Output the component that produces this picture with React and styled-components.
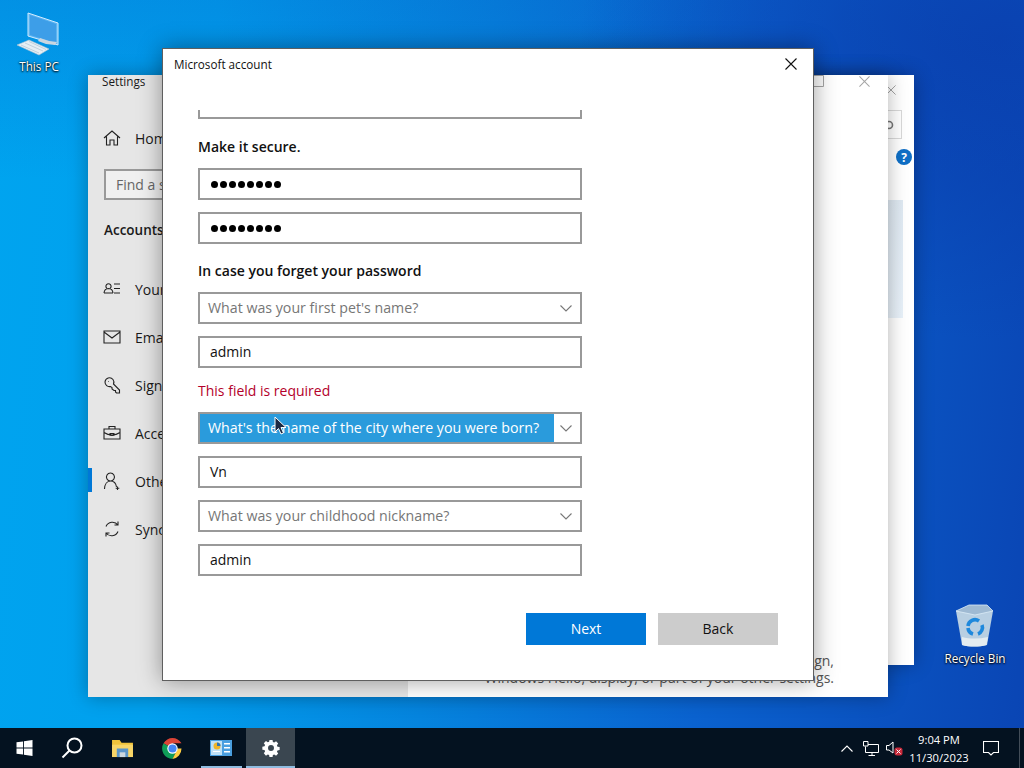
import React from 'react';
import styled, { createGlobalStyle } from 'styled-components';

const GlobalStyle = createGlobalStyle`
  html, body {
    margin: 0;
    padding: 0;
    width: 1024px;
    height: 768px;
    overflow: hidden;
    font-family: "Open Sans", "Noto Sans", sans-serif;
  }
  * { box-sizing: border-box; }
`;

const Screen = styled.div`
  width: 1024px;
  height: 768px;
  display: flex;
  flex-direction: column;
  overflow: hidden;
`;

const Desktop = styled.div`
  position: relative;
  flex: 1;
  background:
    linear-gradient(180deg, rgba(10, 80, 190, 0.22) 0, rgba(10, 80, 190, 0) 180px),
    radial-gradient(ellipse 420px 300px at 1000px 40px, #0a3fae 0%, rgba(10, 63, 174, 0) 100%),
    linear-gradient(96deg, #00a4ef 0%, #00a0ee 20%, #0584de 45%, #0a62cf 70%, #0a45b4 100%);
`;

const DesktopIcon = styled.div`
  position: absolute;
  left: ${(p) => p.$left}px;
  top: ${(p) => p.$top}px;
  width: 76px;
  display: flex;
  flex-direction: column;
  align-items: center;
  gap: 2px;
  color: #fff;
  font-size: 11.7px;
  text-shadow: 0 1px 2px #000, 0 0 2px #000;
`;

const Window = styled.div`
  position: absolute;
  left: ${(p) => p.$left}px;
  top: ${(p) => p.$top}px;
  width: ${(p) => p.$width}px;
  height: ${(p) => p.$height}px;
  background: #fff;
  box-shadow: 0 0 18px rgba(0, 0, 0, 0.3);
`;

const BackWindowBody = styled.div`
  display: flex;
  flex-direction: column;
  align-items: flex-end;
  padding: 10px 10px 0 0;
`;

const BackClose = styled.div`
  width: 10px;
  margin-right: 8px;
  color: #9a9a9a;
  display: flex;
`;

const BackSearch = styled.div`
  width: 120px;
  height: 29px;
  margin: 15px 2px 0 0;
  border: 1px solid #d9d9d9;
  display: flex;
  justify-content: flex-end;
  align-items: center;
  padding-right: 7px;
`;

const HelpBadge = styled.div`
  width: 16px;
  height: 16px;
  margin: 10px -8px 0 0;
  border-radius: 50%;
  background: #0f6fc6;
  color: #fff;
  font-size: 12px;
  font-weight: 700;
  display: flex;
  align-items: center;
  justify-content: center;
`;

const BackSelection = styled.div`
  width: 120px;
  height: 118px;
  margin: 35px 1px 0 0;
  background: linear-gradient(#dfe9f2, #e8f1f9);
`;

const SettingsWindow = styled(Window)`
  display: flex;
`;

const Sidebar = styled.div`
  width: 320px;
  flex: none;
  background: #e6e6e6;
  display: flex;
  flex-direction: column;
`;

const SidebarTitle = styled.div`
  height: 39px;
  line-height: 13px;
  padding: 0 0 0 14px;
  font-size: 11.7px;
  color: #1a1a1a;
`;

const NavRow = styled.div`
  position: relative;
  height: 48px;
  display: flex;
  align-items: center;
  gap: 14px;
  padding-left: 15px;
  font-size: 14px;
  color: #1a1a1a;
  white-space: nowrap;
  svg { flex: none; }
`;

const NavMarker = styled.span`
  position: absolute;
  left: 0;
  top: 11px;
  width: 4px;
  height: 24px;
  background: #0078d7;
`;

const SearchBox = styled.div`
  margin: 7px 0 0 16px;
  width: 270px;
  height: 31px;
  border: 2px solid #999;
  padding-left: 10px;
  display: flex;
  align-items: center;
  font-size: 14px;
  color: #666;
  background: #f0f0f0;
`;

const SidebarHeading = styled.div`
  margin: 21px 0 26px 16px;
  font-size: 13.5px;
  font-weight: 600;
  color: #1a1a1a;
`;

const SettingsMain = styled.div`
  flex: 1;
  min-width: 0;
  display: flex;
  flex-direction: column;
`;

const MainTitleBar = styled.div`
  height: 12px;
  display: flex;
  justify-content: flex-end;
  align-items: center;
  gap: 35px;
  padding-right: 18px;
  color: #a5a5a5;
`;

const MainFoot = styled.div`
  margin-top: auto;
  padding: 0 54px 11px 0;
  font-size: 14px;
  line-height: 17px;
  color: #555;
  text-align: right;
  white-space: nowrap;
`;

const Dialog = styled(Window)`
  border: 1px solid #5f5f5f;
  box-shadow: 0 0 22px rgba(0, 0, 0, 0.38);
  display: flex;
  flex-direction: column;
`;

const DialogTitleBar = styled.div`
  height: 61px;
  flex: none;
  display: flex;
  justify-content: space-between;
  align-items: flex-start;
  padding: 7px 16px 0 11px;
  font-size: 11.7px;
  line-height: 16px;
  color: #111;
`;

const CloseButton = styled.div`
  display: flex;
  color: #111;
  margin-top: 2px;
`;

const Form = styled.div`
  flex: 1;
  display: flex;
  flex-direction: column;
  padding: 0 35px;
`;

const Field = styled.div`
  width: 384px;
  height: 32px;
  flex: none;
  margin-bottom: ${(p) => p.$gap ?? 12}px;
  border: 2px solid #999;
  background: #fff;
  display: flex;
  align-items: center;
  padding: 0 0 2px 10px;
  font-size: 14px;
  color: #111;
`;

const ClippedField = styled(Field)`
  height: 9px;
  border-top: none;
  margin-bottom: 0;
`;

const Dots = styled.span`
  display: flex;
  gap: 2px;
  padding: 2px 0 0 1px;
`;

const Dot = styled.i`
  width: 7px;
  height: 7px;
  border-radius: 50%;
  background: #000;
`;

const Select = styled(Field)`
  padding: 0;
  color: #767676;
  font-size: 14.2px;
`;

const SelectText = styled.div`
  flex: 1;
  height: 100%;
  display: flex;
  align-items: center;
  padding: 0 0 1px 8px;
  white-space: nowrap;
  background: ${(p) => (p.$active ? '#2a9bdc' : 'transparent')};
  color: ${(p) => (p.$active ? '#fff' : 'inherit')};
`;

const SelectArrow = styled.div`
  width: 26px;
  height: 100%;
  flex: none;
  display: flex;
  align-items: center;
  justify-content: center;
  padding-right: 2px;
  color: #777;
`;

const Label = styled.div`
  height: 22px;
  margin: ${(p) => p.$top}px 0 ${(p) => p.$bottom}px;
  line-height: 22px;
  font-size: 14px;
  font-weight: 600;
  color: #111;
`;

const ErrorText = styled(Label)`
  font-weight: 400;
  color: #b4002a;
`;

const ButtonRow = styled.div`
  display: flex;
  justify-content: flex-end;
  gap: 12px;
  margin-top: 37px;
  width: 580px;
`;

const Button = styled.div`
  width: 120px;
  height: 32px;
  padding-bottom: 2px;
  display: flex;
  align-items: center;
  justify-content: center;
  font-size: 14px;
  background: ${(p) => (p.$primary ? '#0078d7' : '#cccccc')};
  color: ${(p) => (p.$primary ? '#fff' : '#111')};
`;

const Pointer = styled.svg`
  position: absolute;
  left: 274px;
  top: 416px;
`;

const Taskbar = styled.div`
  height: 40px;
  flex: none;
  background: #041220;
  display: flex;
  align-items: stretch;
  color: #fff;
`;

const TaskButton = styled.div`
  position: relative;
  width: 49.2px;
  display: flex;
  align-items: center;
  justify-content: center;
  background: ${(p) => (p.$active ? '#3a4650' : 'transparent')};
  &::after {
    content: '';
    display: ${(p) => (p.$open ? 'block' : 'none')};
    position: absolute;
    left: ${(p) => (p.$active ? 0 : 4)}px;
    right: ${(p) => (p.$active ? 0 : 4)}px;
    bottom: 0;
    height: 2px;
    background: #8fbce0;
  }
`;

const Tray = styled.div`
  margin-left: auto;
  display: flex;
  align-items: center;
`;

const TrayIcon = styled.div`
  width: 24px;
  display: flex;
  justify-content: center;
`;

const Clock = styled.div`
  width: 64px;
  padding-top: 1px;
  text-align: center;
  font-size: 11.2px;
  line-height: 18px;
`;

const NoticeButton = styled.div`
  width: 40px;
  margin-right: 8px;
  display: flex;
  justify-content: center;
`;

const ShowDesktop = styled.div`
  width: 5px;
  height: 100%;
  border-left: 1px solid rgba(255, 255, 255, 0.25);
`;

const CloseGlyph = ({ size = 12 }) => (
  <svg width={size} height={size} viewBox="0 0 12 12" fill="none" stroke="currentColor" strokeWidth="1.1">
    <path d="M.5.5l11 11M11.5.5l-11 11" />
  </svg>
);

const Chevron = () => (
  <svg width="12" height="7" viewBox="0 0 12 7" fill="none" stroke="currentColor" strokeWidth="1.1">
    <path d="M.5.5L6 6l5.5-5.5" />
  </svg>
);

const Glyph = ({ children }) => (
  <svg width="18" height="18" viewBox="0 0 18 18" fill="none" stroke="#222" strokeWidth="1.1">
    {children}
  </svg>
);

const navItems = [
  ['Your info', <path key="a" d="M4 8.500a2.600 2.600 0 1 1 3 0M1 13c.3-3 2-4.400 4.500-4.500C8 8.600 9.700 10 10 13M1 13h9M11 4h6M11 8.500h6M11 13h6" />],
  ['Email', <path key="a" d="M1 3h16v12H1zM1 4l8 6 8-6" />],
  ['Sign-in', <path key="a" d="M2 6a4.500 4.500 0 0 1 8-2.500c1 1.300 1 3 .5 4.500l6 6v3h-3l-1-1v-1.500h-1.500L9 13v-1.500L7.500 10.500C4.500 11 2 9 2 6zM5 5.500h.6" />],
  ['Access', <path key="a" d="M1 5h16v10H1zM6 5V2.500h6V5M1 8.500c3 2 5 2.500 8 2.500s5-.500 8-2.500M7 9.500h4v2H7z" />],
  ['Other', <path key="a" d="M7.500 9a4 4 0 1 0-.1 0M1.500 17c.2-4.500 2.500-8 6-8s5.500 2.500 6 6M14.500 14.500v3.500M12.700 16.200h3.600" />],
  ['Sync', <path key="a" d="M3 6.500A7 7 0 0 1 15 5M15 1.500V5h-3.500M15 11.500A7 7 0 0 1 3 13M3 16.500V13h3.500" />],
];

const PcIcon = () => (
  <svg width="46" height="44" viewBox="0 0 46 44">
    <path d="M12 1l30 10v22L12 24z" fill="#5cb5f2" stroke="#cfeaff" strokeWidth="1" />
    <path d="M14 3l26 9v19L14 23z" fill="#3d9ee8" />
    <path d="M24 26l9 3 8 1-2 3-9-1-8-3z" fill="#c9d6e0" />
    <path d="M1 33l12-5 20 9-10 6z" fill="#e6eef4" stroke="#b0c2d0" strokeWidth=".6" />
    <path d="M5 33l18 8M9 31l18 8M13 29.500l17 8" stroke="#a8bccb" strokeWidth=".6" />
  </svg>
);

const BinIcon = () => (
  <svg width="40" height="44" viewBox="0 0 40 44">
    <path d="M1 7L38 7 32 41c-8 2-17 2-25 0z" fill="#b8cfe2" />
    <path d="M1 7L14 1h18l6 6-18 4z" fill="#9fbad3" stroke="#dcecf8" strokeWidth=".8" />
    <path d="M7 33c8 2 17 2 26 0l-1.500 8c-8 2-17 2-24.500 0z" fill="#e4ecf0" />
    <path d="M13 22a7 7 0 0 1 11-5M27 21a7 7 0 0 1-4 9M18 30a7 7 0 0 1-5-6" fill="none" stroke="#1e88dc" strokeWidth="3.600" />
  </svg>
);

const WindowsLogo = () => (
  <svg width="17" height="16" viewBox="0 0 16 16" fill="#fff">
    <path d="M0 2.300L6.500 1.400V7.500H0zM7.400 1.300L16 0V7.500H7.400zM0 8.400H6.500V14.600L0 13.700zM7.400 8.400H16V16L7.400 14.700z" />
  </svg>
);

const SearchIcon = () => (
  <svg width="22" height="22" viewBox="0 0 22 22" fill="none" stroke="#fff" strokeWidth="2" style={{ marginRight: 3 }}>
    <circle cx="13.500" cy="8.500" r="7" />
    <path d="M8.500 13.500L1.500 20.500" />
  </svg>
);

const FolderIcon = () => (
  <svg width="23" height="19" viewBox="0 0 24 20">
    <path d="M1 1h8l2 3h12v15H1z" fill="#f0c33c" />
    <path d="M1 6h22v13H1z" fill="#f8d568" />
    <path d="M6 10h12v9H6z" fill="#5b95c9" />
    <path d="M9 14h6v5H9z" fill="#cdd7de" />
  </svg>
);

const ChromeIcon = () => (
  <svg width="25" height="25" viewBox="0 0 48 48">
    <path d="M24 24L6.700 14A20 20 0 0 1 41.300 14H24z" fill="#db4437" />
    <path d="M24 24L6.700 14A20 20 0 0 0 24 44l10-20z" fill="#0f9d58" />
    <path d="M24 24h17.300A20 20 0 0 1 24 44l10-20z" fill="#ffcd40" />
    <circle cx="24" cy="24" r="10" fill="#fff" />
    <circle cx="24" cy="24" r="7.800" fill="#4285f4" />
  </svg>
);

const PanelIcon = () => (
  <svg width="22" height="16" viewBox="0 0 22 16">
    <path d="M0 0h22v16H0z" fill="#4a9fe0" />
    <path d="M1 1h11v14H1z" fill="#bfe0f6" />
    <circle cx="7" cy="6" r="3.500" fill="#f0b429" />
    <path d="M7 6V2.500A3.500 3.500 0 0 1 10.500 6z" fill="#2f74b5" />
    <path d="M3 11h7v1H3zM14 3h6v1.500h-6zM14 7h6v1.500h-6zM14 11h6v1.500h-6z" fill="#fff" />
  </svg>
);

const GearIcon = () => (
  <svg width="18" height="18" viewBox="-1 0 20 18">
    <path
      fill="#fff"
      fillRule="evenodd"
      d="M7.300 0h3.400l.4 2.400 1.500.6 2-1.400 2.400 2.400-1.400 2 .6 1.500 2.400.4v3.400l-2.400.4-.6 1.500 1.400 2-2.400 2.400-2-1.400-1.500.6-.4 2.400H7.300l-.4-2.400-1.500-.6-2 1.400L1 14.800l1.400-2-.6-1.500L-.6 10.900V7.500l2.400-.4.600-1.500L1 3.600 3.400 1.200l2 1.400 1.500-.6zM9 5.700a3.300 3.300 0 1 0 0 6.600 3.300 3.300 0 0 0 0-6.600z"
    />
  </svg>
);

const TrayChevron = () => (
  <svg width="12" height="7" viewBox="0 0 12 7" fill="none" stroke="#fff" strokeWidth="1.100">
    <path d="M.5 6.500L6 1l5.500 5.500" />
  </svg>
);

const NetworkIcon = () => (
  <svg width="16" height="15" viewBox="0 0 16 15" fill="none" stroke="#fff">
    <path d="M5 3.500H15.500V11.500H2.500V5.500M9 11.500V14M5.500 14.500H12M.5.500H5V5H.5z" />
  </svg>
);

const SpeakerIcon = () => (
  <svg width="18" height="16" viewBox="0 0 18 16">
    <path d="M.5 5.500H3L7 2v11L3 10H.5z" fill="none" stroke="#fff" />
    <rect x="8.500" y="7.500" width="8" height="8" rx="2.500" fill="#c8293a" />
    <path d="M10.500 9.500l4 4M14.500 9.500l-4 4" stroke="#fff" strokeWidth="1" />
  </svg>
);

const NoticeIcon = () => (
  <svg width="16" height="16" viewBox="0 0 16 16" fill="none" stroke="#fff" strokeWidth="1.100">
    <path d="M.5 1.500h15v11h-5L8 15l-2.500-2.500h-5z" />
  </svg>
);

const Password = () => (
  <Field>
    <Dots>
      {Array.from({ length: 8 }).map((_, i) => (
        <Dot key={i} />
      ))}
    </Dots>
  </Field>
);

const Question = ({ text, active }) => (
  <Select>
    <SelectText $active={active}>{text}</SelectText>
    <SelectArrow>
      <Chevron />
    </SelectArrow>
  </Select>
);

export default function App() {
  return (
    <Screen>
      <GlobalStyle />
      <Desktop>
        <DesktopIcon $left={1} $top={12}>
          <PcIcon />
          This PC
        </DesktopIcon>
        <DesktopIcon $left={937} $top={604}>
          <BinIcon />
          Recycle Bin
        </DesktopIcon>

        <Window $left={794} $top={75} $width={120} $height={590}>
          <BackWindowBody>
            <BackClose>
              <CloseGlyph size={10} />
            </BackClose>
            <BackSearch>
              <svg width="10" height="10" viewBox="0 0 10 10" fill="none" stroke="#777" strokeWidth="1.600">
                <circle cx="5" cy="5" r="3.500" />
              </svg>
            </BackSearch>
            <HelpBadge>?</HelpBadge>
            <BackSelection />
          </BackWindowBody>
        </Window>

        <SettingsWindow $left={88} $top={75} $width={800} $height={622}>
          <Sidebar>
            <SidebarTitle>Settings</SidebarTitle>
            <NavRow>
              <Glyph>
                <path d="M1 9l8-7 8 7M3.500 7.500V16H7v-5h4v5h3.500V7.500" />
              </Glyph>
              Home
            </NavRow>
            <SearchBox>Find a setting</SearchBox>
            <SidebarHeading>Accounts</SidebarHeading>
            {navItems.map(([label, icon]) => (
              <NavRow key={label}>
                {label === 'Other' && <NavMarker />}
                <Glyph>{icon}</Glyph>
                {label}
              </NavRow>
            ))}
          </Sidebar>
          <SettingsMain>
            <MainTitleBar>
              <svg width="12" height="12" viewBox="0 0 12 12" fill="none" stroke="currentColor">
                <path d="M.5.500h11v11H.5z" />
              </svg>
              <CloseGlyph size={11} />
            </MainTitleBar>
            <MainFoot>
              sign,
              <br />
              Windows Hello, display, or part of your other settings.
            </MainFoot>
          </SettingsMain>
        </SettingsWindow>

        <Dialog $left={162} $top={48} $width={652} $height={633}>
          <DialogTitleBar>
            Microsoft account
            <CloseButton>
              <CloseGlyph />
            </CloseButton>
          </DialogTitleBar>
          <Form>
            <ClippedField />
            <Label $top={17} $bottom={10}>Make it secure.</Label>
            <Password />
            <Password />
            <Label $top={4} $bottom={10}>In case you forget your password</Label>
            <Question text="What was your first pet's name?" />
            <Field>admin</Field>
            <ErrorText $top={0} $bottom={10}>This field is required</ErrorText>
            <Question text="What's the name of the city where you were born?" active />
            <Field>Vn</Field>
            <Question text="What was your childhood nickname?" />
            <Field $gap={0}>admin</Field>
            <ButtonRow>
              <Button $primary>Next</Button>
              <Button>Back</Button>
            </ButtonRow>
          </Form>
        </Dialog>

        <Pointer width="13" height="20" viewBox="0 0 13 20">
          <path d="M1 1v15l3.500-3.500L7 18l2.500-1-2.500-5.500h5z" fill="#1d2a44" stroke="#fff" />
        </Pointer>
      </Desktop>

      <Taskbar>
        <TaskButton><WindowsLogo /></TaskButton>
        <TaskButton><SearchIcon /></TaskButton>
        <TaskButton><FolderIcon /></TaskButton>
        <TaskButton><ChromeIcon /></TaskButton>
        <TaskButton $open><PanelIcon /></TaskButton>
        <TaskButton $open $active><GearIcon /></TaskButton>
        <Tray>
          <TrayIcon><TrayChevron /></TrayIcon>
          <TrayIcon><NetworkIcon /></TrayIcon>
          <TrayIcon><SpeakerIcon /></TrayIcon>
          <Clock>
            9:04 PM
            <br />
            11/30/2023
          </Clock>
          <NoticeButton><NoticeIcon /></NoticeButton>
          <ShowDesktop />
        </Tray>
      </Taskbar>
    </Screen>
  );
}
